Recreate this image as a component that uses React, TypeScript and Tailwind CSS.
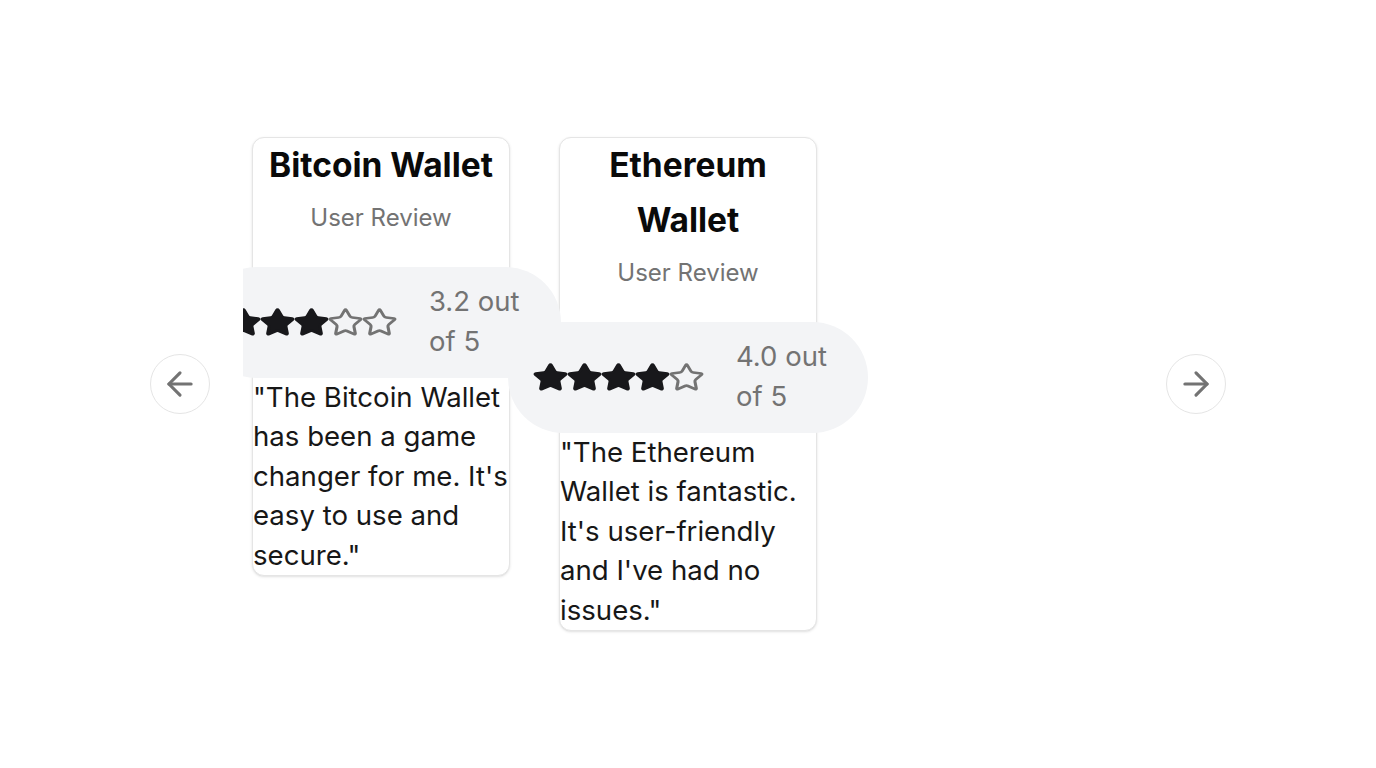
import { ArrowLeft, ArrowRight } from "lucide-react";

interface Review {
    id: number;
    wallet: string;
    rating: number;
    text: string;
}

const REVIEWS: Review[] = [
    {
        id: 1,
        wallet: "Bitcoin Wallet",
        rating: 3.2,
        text: "\"The Bitcoin Wallet has been a game changer for me. It's easy to use and secure.\"",
    },
    {
        id: 2,
        wallet: "Ethereum Wallet",
        rating: 4.0,
        text: "\"The Ethereum Wallet is fantastic. It's user-friendly and I've had no issues.\"",
    },
];

function Star({ filled }: { filled: boolean }) {
    return (
        <svg
            viewBox="0 0 24 24"
            width={37}
            height={31}
            preserveAspectRatio="none"
            fill={filled ? "#18181b" : "none"}
            stroke={filled ? "#18181b" : "#737373"}
            strokeWidth={2}
            strokeLinecap="round"
            strokeLinejoin="round"
            className="-mx-[1.5px] shrink-0"
        >
            <path d="M11.525 2.295a.53.53 0 0 1 .95 0l2.31 4.679a2.123 2.123 0 0 0 1.595 1.16l5.166.756a.53.53 0 0 1 .294.904l-3.736 3.638a2.123 2.123 0 0 0-.611 1.878l.882 5.14a.53.53 0 0 1-.771.56l-4.618-2.428a2.122 2.122 0 0 0-1.973 0L6.396 21.01a.53.53 0 0 1-.77-.56l.881-5.139a2.122 2.122 0 0 0-.611-1.879L2.16 9.795a.53.53 0 0 1 .294-.906l5.165-.755a2.122 2.122 0 0 0 1.597-1.16z" />
        </svg>
    );
}

function ReviewCard({ review }: { review: Review }) {
    const full = Math.floor(review.rating);
    return (
        <div className="w-[258px] shrink-0 flex flex-col border border-neutral-200 rounded-xl bg-white shadow-sm">
            {/* ── HEADER ── */}
            <div className="text-center">
                <h2 className="text-[33.5px] leading-[55px] font-bold text-neutral-950">
                    {review.wallet}
                </h2>
                <p className="mt-[8px] text-[24px] leading-[33px] text-neutral-500">User Review</p>
            </div>

            {/* ── RATING PILL ── */}
            <div className="relative z-10 -mx-[52px] mt-[33px] h-[111px] rounded-full bg-gray-100 flex items-center pl-[25px]">
                <div className="flex items-center w-[171px]">
                    {[0, 1, 2, 3, 4].map((i) => (
                        <Star key={i} filled={i < full} />
                    ))}
                </div>
                <p className="ml-[32px] w-[112px] text-[27.5px] leading-[39.6px] text-neutral-500">
                    {review.rating.toFixed(1)} out of 5
                </p>
            </div>

            {/* ── TEXT ── */}
            <p className="text-[27.6px] leading-[39.6px] text-neutral-900">{review.text}</p>
        </div>
    );
}

function NavButton({ dir }: { dir: "left" | "right" }) {
    return (
        <button className="w-[60px] h-[60px] shrink-0 rounded-full border border-neutral-200 bg-white flex items-center justify-center text-neutral-500">
            {dir === "left" ? <ArrowLeft size={38} strokeWidth={2} /> : <ArrowRight size={38} strokeWidth={2} />}
        </button>
    );
}

export default function App() {
    return (
        <div
            className="min-h-screen bg-white flex items-center justify-center"
            style={{ fontFamily: "Inter, 'Noto Sans', sans-serif" }}
        >
            <div className="flex items-center gap-[33px]">
                <NavButton dir="left" />
                <div className="w-[890px] overflow-hidden py-2">
                    <div className="flex items-start gap-[49px] pl-[9px]">
                        {REVIEWS.map((r) => (
                            <ReviewCard key={r.id} review={r} />
                        ))}
                    </div>
                </div>
                <NavButton dir="right" />
            </div>
        </div>
    );
}
